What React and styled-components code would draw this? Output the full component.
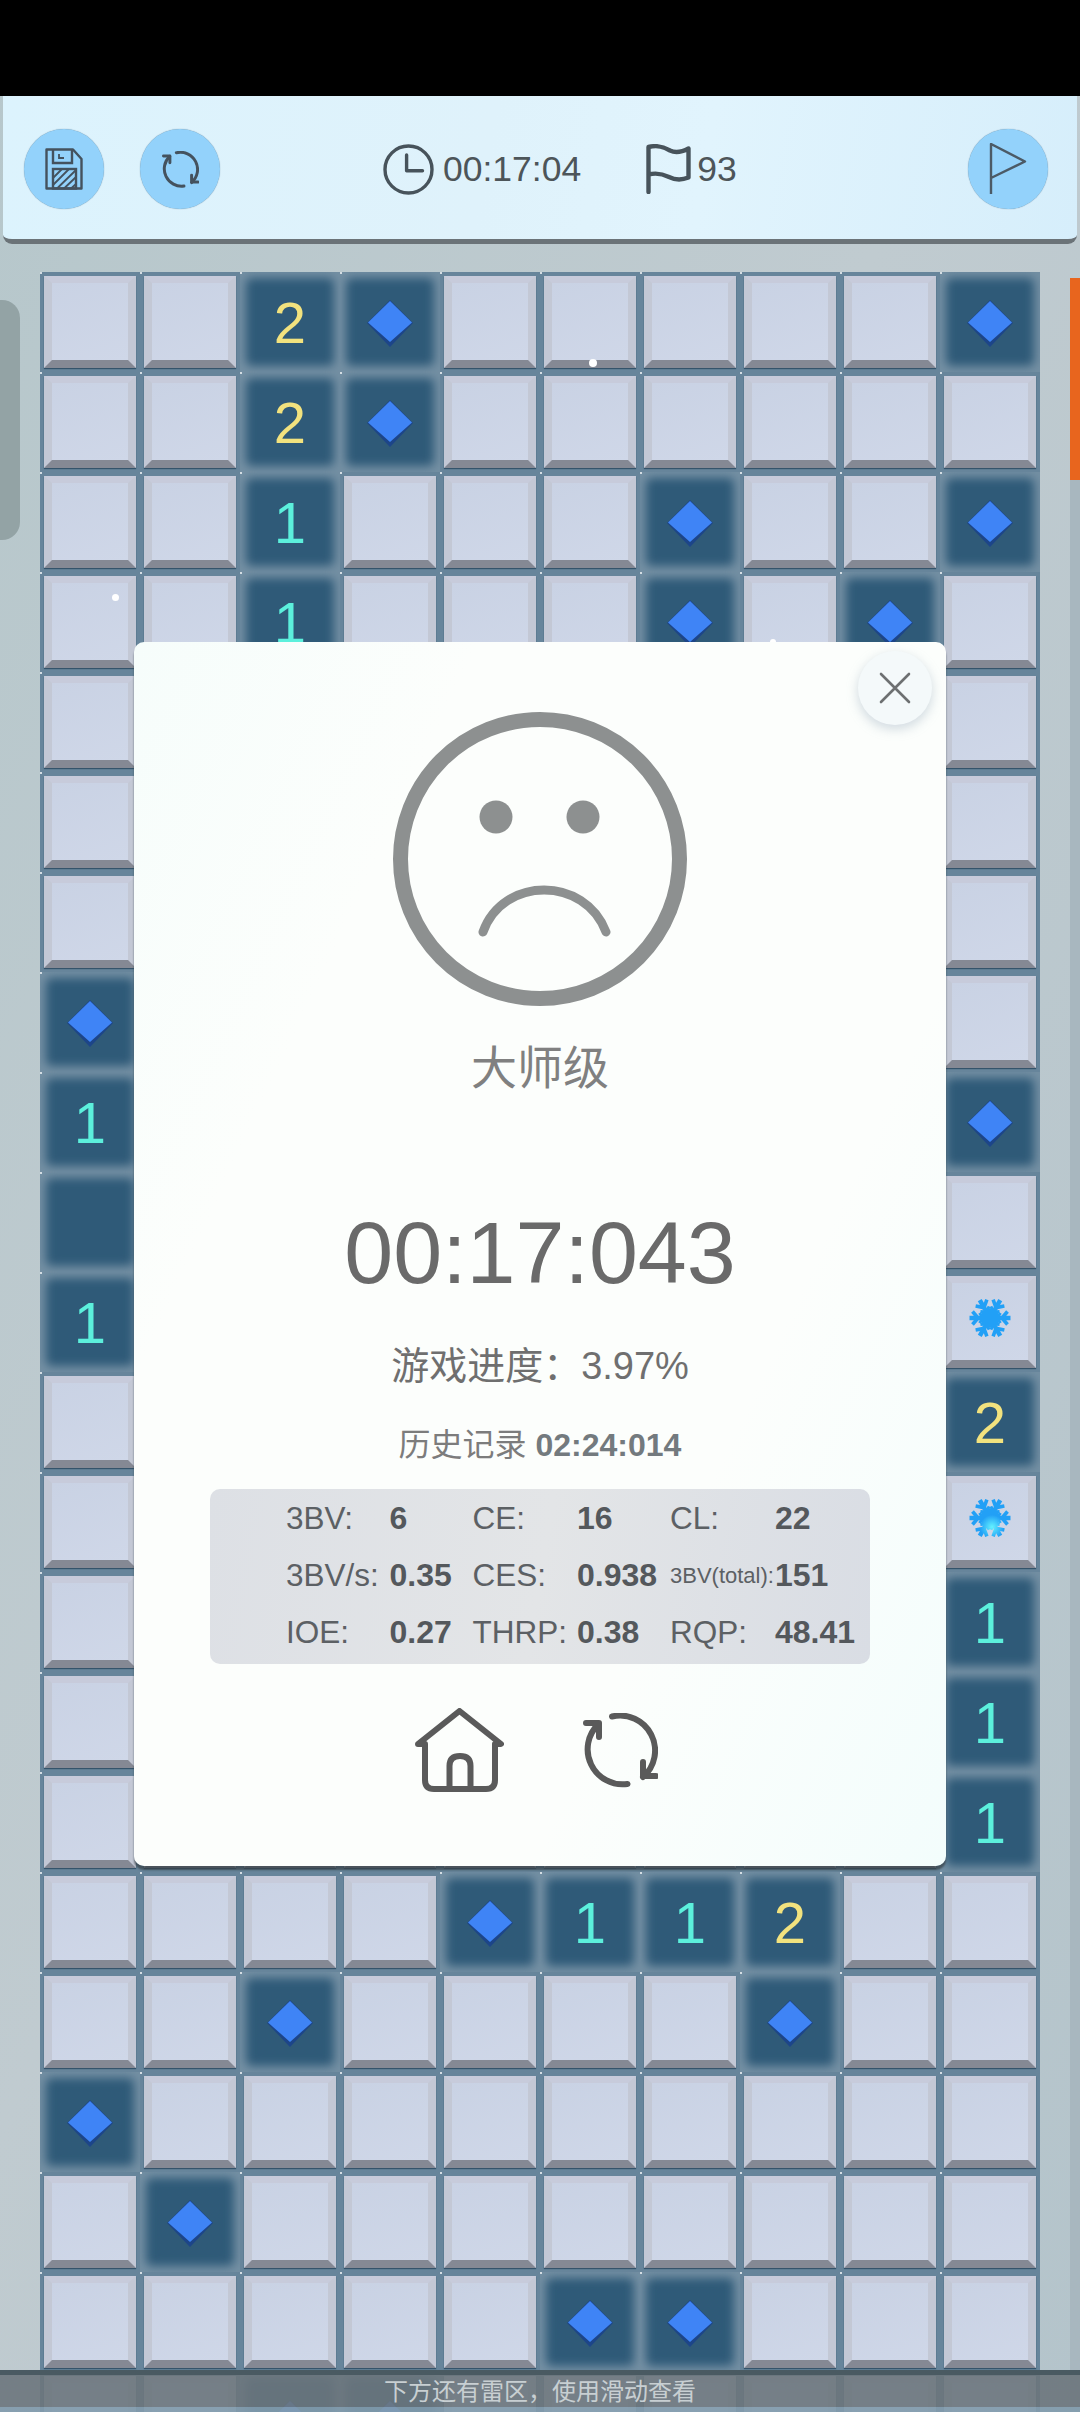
import React from 'react';
import styled, { createGlobalStyle } from 'styled-components';

const board = [
  '..2d.....d',
  '..2d......',
  '..1...d..d',
  '..1...d.d.',
  '..........',
  '..........',
  '..........',
  'd.........',
  '1........d',
  '0.........',
  '1........s',
  '.........2',
  '.........g',
  '.........1',
  '.........1',
  '.........1',
  '....d112..',
  '..d....d..',
  'd.........',
  '.d........',
  '.....dd...',
  '..dd......',
];

const stats = [
  ['3BV:', '6', 'CE:', '16', 'CL:', '22'],
  ['3BV/s:', '0.35', 'CES:', '0.938', '3BV(total):', '151'],
  ['IOE:', '0.27', 'THRP:', '0.38', 'RQP:', '48.41'],
];

const RefreshIcon = ({ size, color }) => (
  <svg width={size} height={size} viewBox="0 0 75 75" fill="none" stroke={color} strokeWidth="6" strokeLinecap="round" strokeLinejoin="round">
    <path d="M29 3.5A35 35 0 0 1 60 64" />
    <path d="M73 63H60V49" />
    <path d="M44.5 71A35 35 0 0 1 15.5 11" />
    <path d="M3 10H16V24" />
  </svg>
);

const SaveIcon = () => (
  <svg width="38" height="42" viewBox="0 0 38 42" fill="none" stroke="#44525e" strokeWidth="2.4">
    <path d="M1.5 1.5H28L36.5 11V40.5H1.5Z" strokeLinejoin="round" />
    <path d="M8 1.5V15H27V1.5" />
    <path d="M14 6V10H19" strokeWidth="1.8" />
    <rect x="8" y="21" width="23" height="19.5" />
    <path d="M8 30L17 21M8 37L24 21M12 40.5L31 22M19 40.5L31 29M26 40.5L31 36" strokeWidth="1.8" />
  </svg>
);

const ClockIcon = () => (
  <svg width="51" height="51" viewBox="0 0 51 51" fill="none" stroke="#47535b" strokeWidth="3.4" strokeLinecap="round" strokeLinejoin="round">
    <circle cx="25.5" cy="25.5" r="23.5" />
    <path d="M23.6 11V26.7H39.5" />
  </svg>
);

const FlagIcon = () => (
  <svg width="45" height="50" viewBox="0 0 45 50" fill="none" stroke="#47535b" strokeWidth="4.4" strokeLinecap="round" strokeLinejoin="round">
    <path d="M2.5 48V3C12 0.5 18 3 24 6.5C30 9.5 36 8 42.5 4.5V33.5C35 36.5 29 36 23 33C16 29.5 10 28.5 2.5 30.5" />
  </svg>
);

const PennantIcon = () => (
  <svg width="38" height="52" viewBox="0 0 38 52" fill="none" stroke="#4b5a66" strokeWidth="2.4" strokeLinejoin="round">
    <path d="M2 51V1L36 18.5L2 35" />
  </svg>
);

const FaceIcon = () => (
  <svg width="294" height="294" viewBox="0 0 294 294" fill="none" stroke="#8d9090">
    <circle cx="147" cy="147" r="139.5" strokeWidth="15" />
    <circle cx="103" cy="105" r="16.5" fill="#8d9090" stroke="none" />
    <circle cx="190" cy="105" r="16.5" fill="#8d9090" stroke="none" />
    <path d="M90 220C110 164 192 164 213 220" strokeWidth="9" strokeLinecap="round" />
  </svg>
);

const CloseIcon = () => (
  <svg width="32" height="32" viewBox="0 0 32 32" fill="none" stroke="#6d7071" strokeWidth="2.6" strokeLinecap="round">
    <path d="M2 2L30 30M30 2L2 30" />
  </svg>
);

const HomeIcon = () => (
  <svg width="89" height="84" viewBox="0 0 89 84" fill="none" stroke="#5a5a5a" strokeWidth="6" strokeLinecap="round" strokeLinejoin="round">
    <path d="M3 36L44.5 3L86 36H80V72Q80 81 71 81H19Q10 81 10 72V36Z" />
    <path d="M34.5 81V58Q34.5 48 45 48Q55.5 48 55.5 58V81" />
  </svg>
);

const Diamond = () => (
  <svg width="46" height="47" viewBox="0 0 46 47">
    <path d="M23 0L46 23L23 47L0 23Z" fill="#1d4588" />
    <path d="M23 1L45 22.5L23 42L1 22.5Z" fill="#3f84f6" />
  </svg>
);

const Snowflake = ({ glow, id }) => (
  <svg width="42" height="42" viewBox="0 0 42 42">
    <defs>
      <radialGradient id={`${id}-fill`} gradientUnits="userSpaceOnUse" cx="23" cy="30" r="12">
        <stop offset="0" stopColor={glow ? '#63f2ff' : '#22a0f6'} />
        <stop offset="1" stopColor="#22a0f6" />
      </radialGradient>
      <mask id={`${id}-shape`}>
        <g stroke="#fff" fill="#fff">
          {[30, 90, 150, 210, 270, 330].map((angle) => (
            <g key={angle} transform={`rotate(${angle} 21 21)`}>
              <path d="M21 21V0.5" strokeWidth="4.5" />
              <path d="M21 9L14.5 3.5M21 9L27.5 3.5" strokeWidth="3.6" />
              <path d="M21 14L16 10.5M21 14L26 10.5" strokeWidth="3" />
            </g>
          ))}
          <path d="M21 11L29.7 16V26L21 31L12.3 26V16Z" stroke="none" />
        </g>
      </mask>
    </defs>
    <rect width="42" height="42" fill={`url(#${id}-fill)`} mask={`url(#${id}-shape)`} />
  </svg>
);

const renderCell = (value, id) => {
  if (value === '.') return <Covered />;
  if (value === 's' || value === 'g') {
    return (
      <Covered>
        <Snowflake glow={value === 'g'} id={id} />
      </Covered>
    );
  }
  return (
    <Opened>
      {value === 'd' && <Diamond />}
      {value === '1' && <Digit $color="#5cf0dc">1</Digit>}
      {value === '2' && <Digit $color="#f2e27e">2</Digit>}
    </Opened>
  );
};

const App = () => (
  <Page>
    <GlobalStyle />
    <BlackBar />
    <Toolbar>
      <ToolGroup>
        <RoundButton><SaveIcon /></RoundButton>
        <RoundButton><RefreshIcon size={37} color="#44525e" /></RoundButton>
      </ToolGroup>
      <Counter $left={163} $gap={9}>
        <ClockIcon />
        <CounterText>00:17:04</CounterText>
      </Counter>
      <Counter $left={65} $gap={6}>
        <FlagIcon />
        <CounterText>93</CounterText>
      </Counter>
      <RoundButton $push><PennantIcon /></RoundButton>
    </Toolbar>

    <Board>
      {board.map((row, r) =>
        row.split('').map((value, c) => (
          <Slot key={`${r}-${c}`} $open={!'.sg'.includes(value)}>
            {renderCell(value, `snow-${r}-${c}`)}
          </Slot>
        ))
      )}
    </Board>

    <LeftHandle />
    <RightRail />
    <OrangeMark />
    <Sparkle $x={593} $y={363} $size={8} />
    <Sparkle $x={115} $y={597} $size={7} />
    <Sparkle $x={773} $y={642} $size={6} />

    <Dialog>
      <CloseButton><CloseIcon /></CloseButton>
      <FaceIcon />
      <Level>大师级</Level>
      <Time>00:17:043</Time>
      <Progress>游戏进度：3.97%</Progress>
      <Record>历史记录 <b>02:24:014</b></Record>
      <StatsPanel>
        {stats.flat().map((text, i) =>
          i % 2 === 0 ? (
            <StatLabel key={i} $small={text.length > 8}>{text}</StatLabel>
          ) : (
            <StatValue key={i}>{text}</StatValue>
          )
        )}
      </StatsPanel>
      <Actions>
        <HomeIcon />
        <RefreshIcon size={75} color="#5a5a5a" />
      </Actions>
    </Dialog>

    <HintBar>下方还有雷区，使用滑动查看</HintBar>
  </Page>
);

const GlobalStyle = createGlobalStyle`
  html, body {
    margin: 0;
    padding: 0;
    background: #b9c7cb;
  }
  * {
    box-sizing: border-box;
  }
`;

const Page = styled.div`
  position: relative;
  width: 1080px;
  height: 2412px;
  overflow: hidden;
  display: flex;
  flex-direction: column;
  font-family: "Liberation Sans", "Noto Sans CJK SC", sans-serif;
  background: linear-gradient(115deg, #b6c7cb 0%, #c0cbd0 45%, #b4c4cb 100%);
`;

const BlackBar = styled.div`
  height: 96px;
  flex: none;
  background: #000;
`;

const Toolbar = styled.div`
  flex: none;
  height: 148px;
  margin: 0 3px;
  padding: 3px 29px 0 21px;
  display: flex;
  align-items: center;
  background: linear-gradient(100deg, #dcf3fd 0%, #dff2fb 45%, #e1f4fd 65%, #d6eefb 100%);
  border-bottom: 5px solid #6b7378;
  border-radius: 0 0 9px 9px;
`;

const ToolGroup = styled.div`
  display: flex;
  gap: 36px;
`;

const RoundButton = styled.div`
  width: 80px;
  height: 80px;
  flex: none;
  margin-left: ${(p) => (p.$push ? 'auto' : '0')};
  border-radius: 50%;
  background: #93d2fb;
  box-shadow: 0 0 1px #5d7f96;
  display: flex;
  align-items: center;
  justify-content: center;
`;

const Counter = styled.div`
  margin-left: ${(p) => p.$left}px;
  display: flex;
  align-items: center;
  gap: ${(p) => p.$gap}px;
`;

const CounterText = styled.span`
  font-size: 35.5px;
  line-height: 50px;
  color: #4d5559;
`;

const Board = styled.div`
  flex: none;
  width: 1000px;
  margin: 28px 0 0 40px;
  display: grid;
  grid-template-columns: repeat(10, 100px);
  grid-auto-rows: 100px;
  background: #67859b;
`;

const Slot = styled.div`
  position: relative;
  padding: 4px;
  overflow: hidden;
  background: ${(p) => (p.$open ? '#738fa3' : 'transparent')};

  &::before {
    content: '';
    position: absolute;
    left: -1px;
    top: 0;
    width: 3px;
    height: 2px;
    background: #d5dee4;
    z-index: 1;
  }
`;

const Covered = styled.div`
  width: 100%;
  height: 100%;
  display: flex;
  align-items: center;
  justify-content: center;
  background: linear-gradient(160deg, #c9d2e4, #cfd7e8);
  border-style: solid;
  border-width: 7px 8px 8px;
  border-color: #c7cbdb #c3c8d5 #858994 #c3c8d5;
  box-shadow: 0 1px 1px #34536a;
  padding-bottom: 7px;
`;

const Opened = styled.div`
  position: relative;
  width: 100%;
  height: 100%;
  padding-top: 2px;
  display: flex;
  align-items: center;
  justify-content: center;

  &::before {
    content: '';
    position: absolute;
    inset: 2px;
    border-radius: 6px;
    background: #2f5a78;
    filter: blur(5px);
  }

  > * {
    position: relative;
  }
`;

const Digit = styled.span`
  font-size: 58px;
  line-height: 1;
  color: ${(p) => p.$color};
`;

const LeftHandle = styled.div`
  position: absolute;
  left: 0;
  top: 300px;
  width: 20px;
  height: 240px;
  background: #93a3a5;
  border-radius: 0 18px 18px 0;
`;

const RightRail = styled.div`
  position: absolute;
  right: 0;
  top: 278px;
  bottom: 0;
  width: 10px;
  background: #a8b7bf;
`;

const OrangeMark = styled.div`
  position: absolute;
  right: 0;
  top: 278px;
  width: 10px;
  height: 202px;
  background: #e8651e;
`;

const Sparkle = styled.div`
  position: absolute;
  z-index: 2;
  left: ${(p) => p.$x - p.$size / 2}px;
  top: ${(p) => p.$y - p.$size / 2}px;
  width: ${(p) => p.$size}px;
  height: ${(p) => p.$size}px;
  border-radius: 50%;
  background: #fff;
`;

const Dialog = styled.div`
  position: absolute;
  z-index: 3;
  left: 134px;
  top: 642px;
  width: 812px;
  height: 1224px;
  padding-top: 70px;
  display: flex;
  flex-direction: column;
  align-items: center;
  border-radius: 10px;
  background: linear-gradient(115deg, #f6fdfb 0%, #fcfefc 25%, #fcfefc 70%, #f3fdfc 100%);
  box-shadow: 0 4px 2px rgba(55, 66, 72, 0.75);
`;

const CloseButton = styled.div`
  position: absolute;
  top: 9px;
  right: 14px;
  width: 74px;
  height: 74px;
  border-radius: 50%;
  background: #f4f9fa;
  box-shadow: 0 4px 12px rgba(140, 160, 180, 0.4);
  display: flex;
  align-items: center;
  justify-content: center;
`;

const Level = styled.div`
  margin-top: 32px;
  font-size: 46px;
  line-height: 60px;
  color: #808080;
`;

const Time = styled.div`
  margin-top: 105px;
  font-size: 88px;
  line-height: 100px;
  color: #6a6a6a;
`;

const Progress = styled.div`
  margin-top: 38px;
  font-size: 38px;
  line-height: 50px;
  color: #6f6f6f;
`;

const Record = styled.div`
  margin-top: 34px;
  font-size: 32px;
  line-height: 40px;
  color: #7c7c7c;

  b {
    color: #737a7e;
  }
`;

const StatsPanel = styled.div`
  margin-top: 24px;
  align-self: flex-start;
  margin-left: 76px;
  width: 660px;
  height: 175px;
  padding: 1px 0 0 76px;
  display: grid;
  grid-template-columns: 103.5px 83px 104.5px 93px 105px 95px;
  grid-auto-rows: 57px;
  align-items: center;
  border-radius: 10px;
  background: linear-gradient(100deg, #dde0e5 0%, #e3e5e7 50%, #d9dde4 100%);
`;

const StatLabel = styled.span`
  font-size: ${(p) => (p.$small ? '22px' : '31.5px')};
  color: #5c6064;
  white-space: nowrap;
`;

const StatValue = styled.span`
  font-size: 32px;
  font-weight: 700;
  color: #54585c;
  white-space: nowrap;
`;

const Actions = styled.div`
  margin-top: 44px;
  align-self: flex-start;
  margin-left: 281px;
  display: flex;
  align-items: center;
  gap: 79px;
`;

const HintBar = styled.div`
  position: absolute;
  z-index: 3;
  left: 0;
  right: 0;
  top: 2370px;
  height: 37px;
  text-align: center;
  font-size: 24px;
  line-height: 34px;
  color: #c8cfd2;
  background: rgba(108, 118, 124, 0.9);
  border-top: 5px solid #4a5a62;
  box-shadow: 0 5px 0 rgba(130, 155, 172, 0.92);
`;

export default App;
